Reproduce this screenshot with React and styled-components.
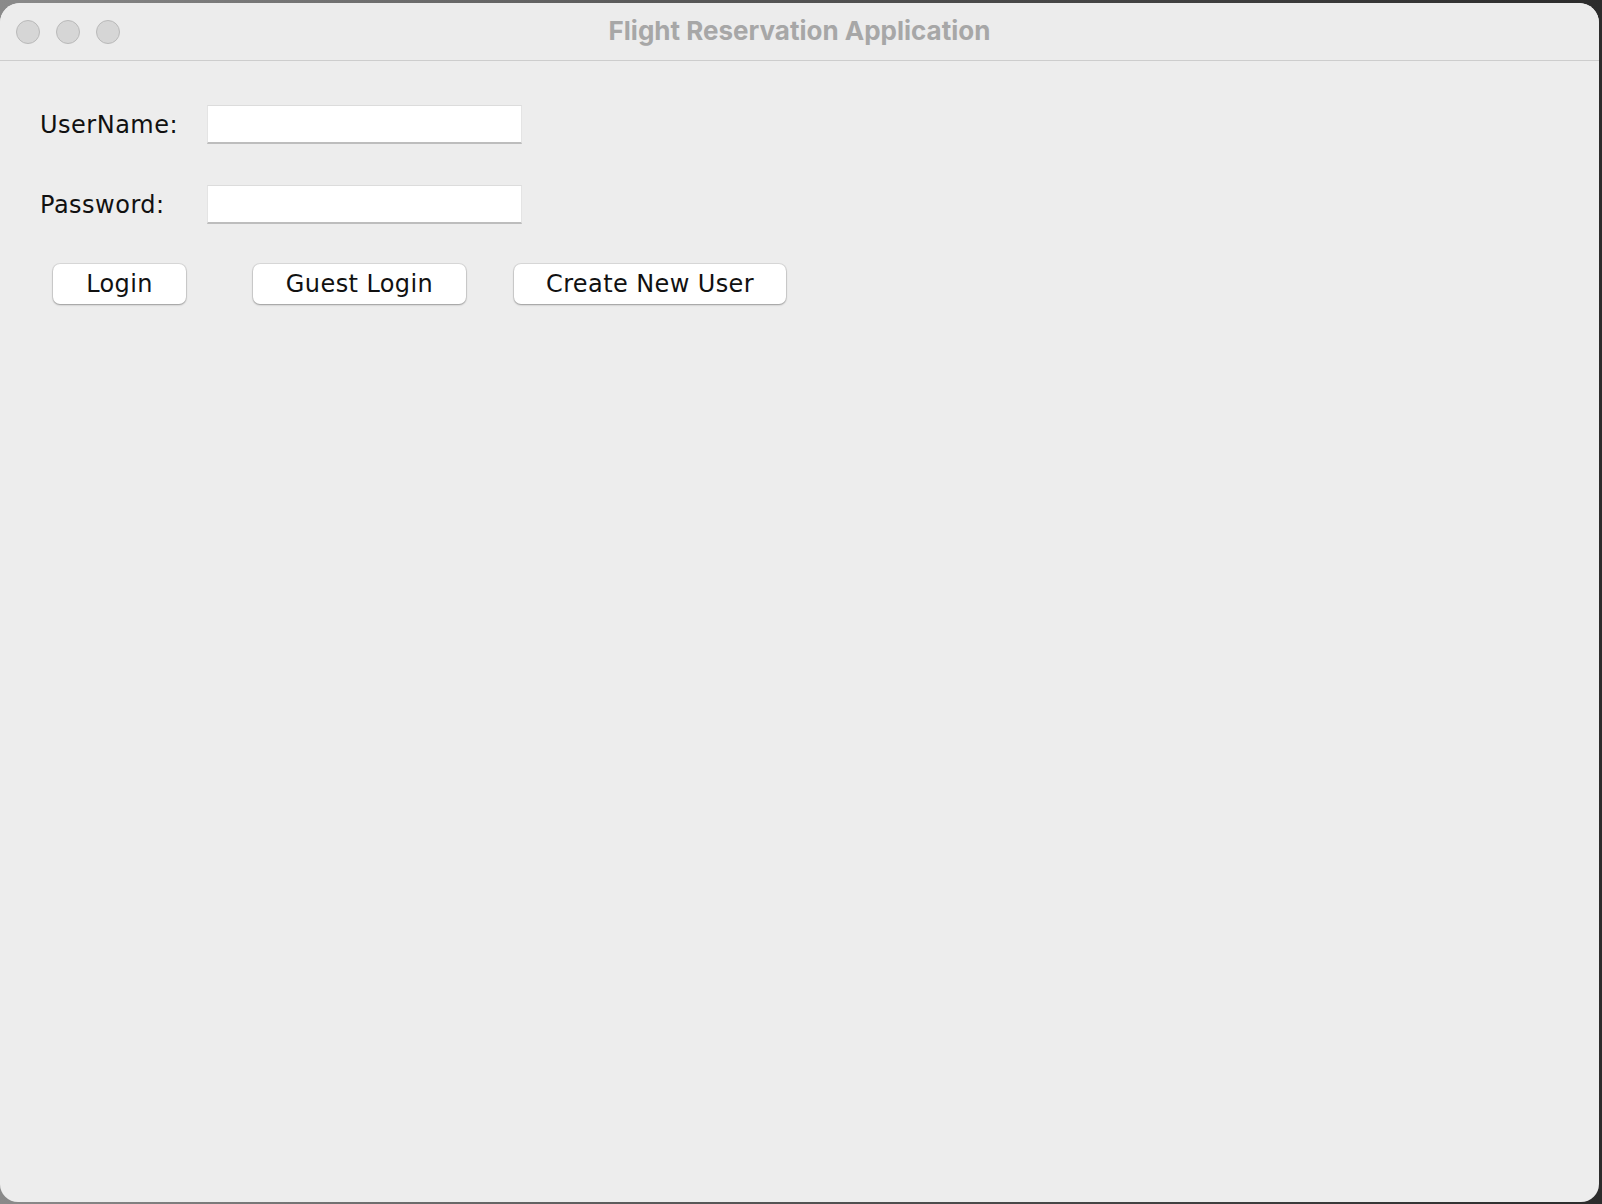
import React from 'react';
import styled, { createGlobalStyle } from 'styled-components';

const GlobalStyle = createGlobalStyle`
  html, body {
    margin: 0;
    padding: 0;
    background: #2c2c2c;
  }
  * {
    box-sizing: border-box;
  }
`;

const App = () => {
    return (
        <>
            <GlobalStyle />
            <Desktop>
                <Window>
                    <TitleBar>
                        <Lights>
                            <Light />
                            <Light />
                            <Light />
                        </Lights>
                        <Title>Flight Reservation Application</Title>
                        <span />
                    </TitleBar>
                    <Content>
                        <Form>
                            <Label htmlFor="username">UserName:</Label>
                            <Field id="username" type="text" />
                            <Label htmlFor="password">Password:</Label>
                            <Field id="password" type="password" />
                        </Form>
                        <ButtonRow>
                            <Button $width={133} $offset={13}>Login</Button>
                            <Button $width={213} $offset={67}>Guest Login</Button>
                            <Button $width={272} $offset={48}>Create New User</Button>
                        </ButtonRow>
                    </Content>
                </Window>
            </Desktop>
        </>
    );
};

export default App;

const Desktop = styled.div`
  width: 1602px;
  height: 1204px;
  padding-top: 3px;
  background: linear-gradient(90deg, #8a8a8a 0%, #5a5a5a 40%, #2c2c2c 100%);
`;

const Window = styled.div`
  width: 1599px;
  height: 1199px;
  background: #ededed;
  border-radius: 20px 20px 18px 18px;
  overflow: hidden;
  display: flex;
  flex-direction: column;
`;

const TitleBar = styled.div`
  height: 58px;
  flex: none;
  display: grid;
  grid-template-columns: 1fr auto 1fr;
  align-items: center;
  border-bottom: 1px solid #cdcdcd;
  background: #ececec;
`;

const Lights = styled.div`
  display: flex;
  gap: 16px;
  padding-left: 16px;
`;

const Light = styled.span`
  width: 24px;
  height: 24px;
  border-radius: 50%;
  background: #d6d6d6;
  border: 1px solid #b9b9b9;
`;

const Title = styled.div`
  font-family: Inter, "Liberation Sans", sans-serif;
  font-weight: 700;
  font-size: 26px;
  color: #a7a7a7;
  margin-top: -2px;
`;

const Content = styled.div`
  padding: 44px 0 0 40px;
  font-family: "DejaVu Sans", "Liberation Sans", sans-serif;
`;

const Form = styled.div`
  display: grid;
  grid-template-columns: 167px 315px;
  grid-auto-rows: 39px;
  row-gap: 41px;
  align-items: center;
`;

const Label = styled.label`
  font-size: 24px;
  letter-spacing: 0.5px;
  color: #111;
  padding-top: 1px;
`;

const Field = styled.input`
  width: 315px;
  height: 39px;
  border: none;
  outline: none;
  background: #ffffff;
  border-top: 1px solid #dcdcdc;
  border-left: 1px solid #e4e4e4;
  border-right: 1px solid #e4e4e4;
  border-bottom: 2px solid #bdbdbd;
  font-family: inherit;
  font-size: 22px;
  padding: 0 6px;
`;

const ButtonRow = styled.div`
  display: flex;
  margin-top: 40px;
`;

const Button = styled.button`
  width: ${p => p.$width}px;
  margin-left: ${p => p.$offset}px;
  height: 40px;
  border: none;
  border-radius: 7px;
  background: #ffffff;
  box-shadow: 0 0 0 1px rgba(0, 0, 0, 0.08), 0 1px 2px rgba(0, 0, 0, 0.3);
  font-family: "DejaVu Sans", "Liberation Sans", sans-serif;
  font-size: 24px;
  letter-spacing: 0.4px;
  color: #111;
  padding: 0;
`;
